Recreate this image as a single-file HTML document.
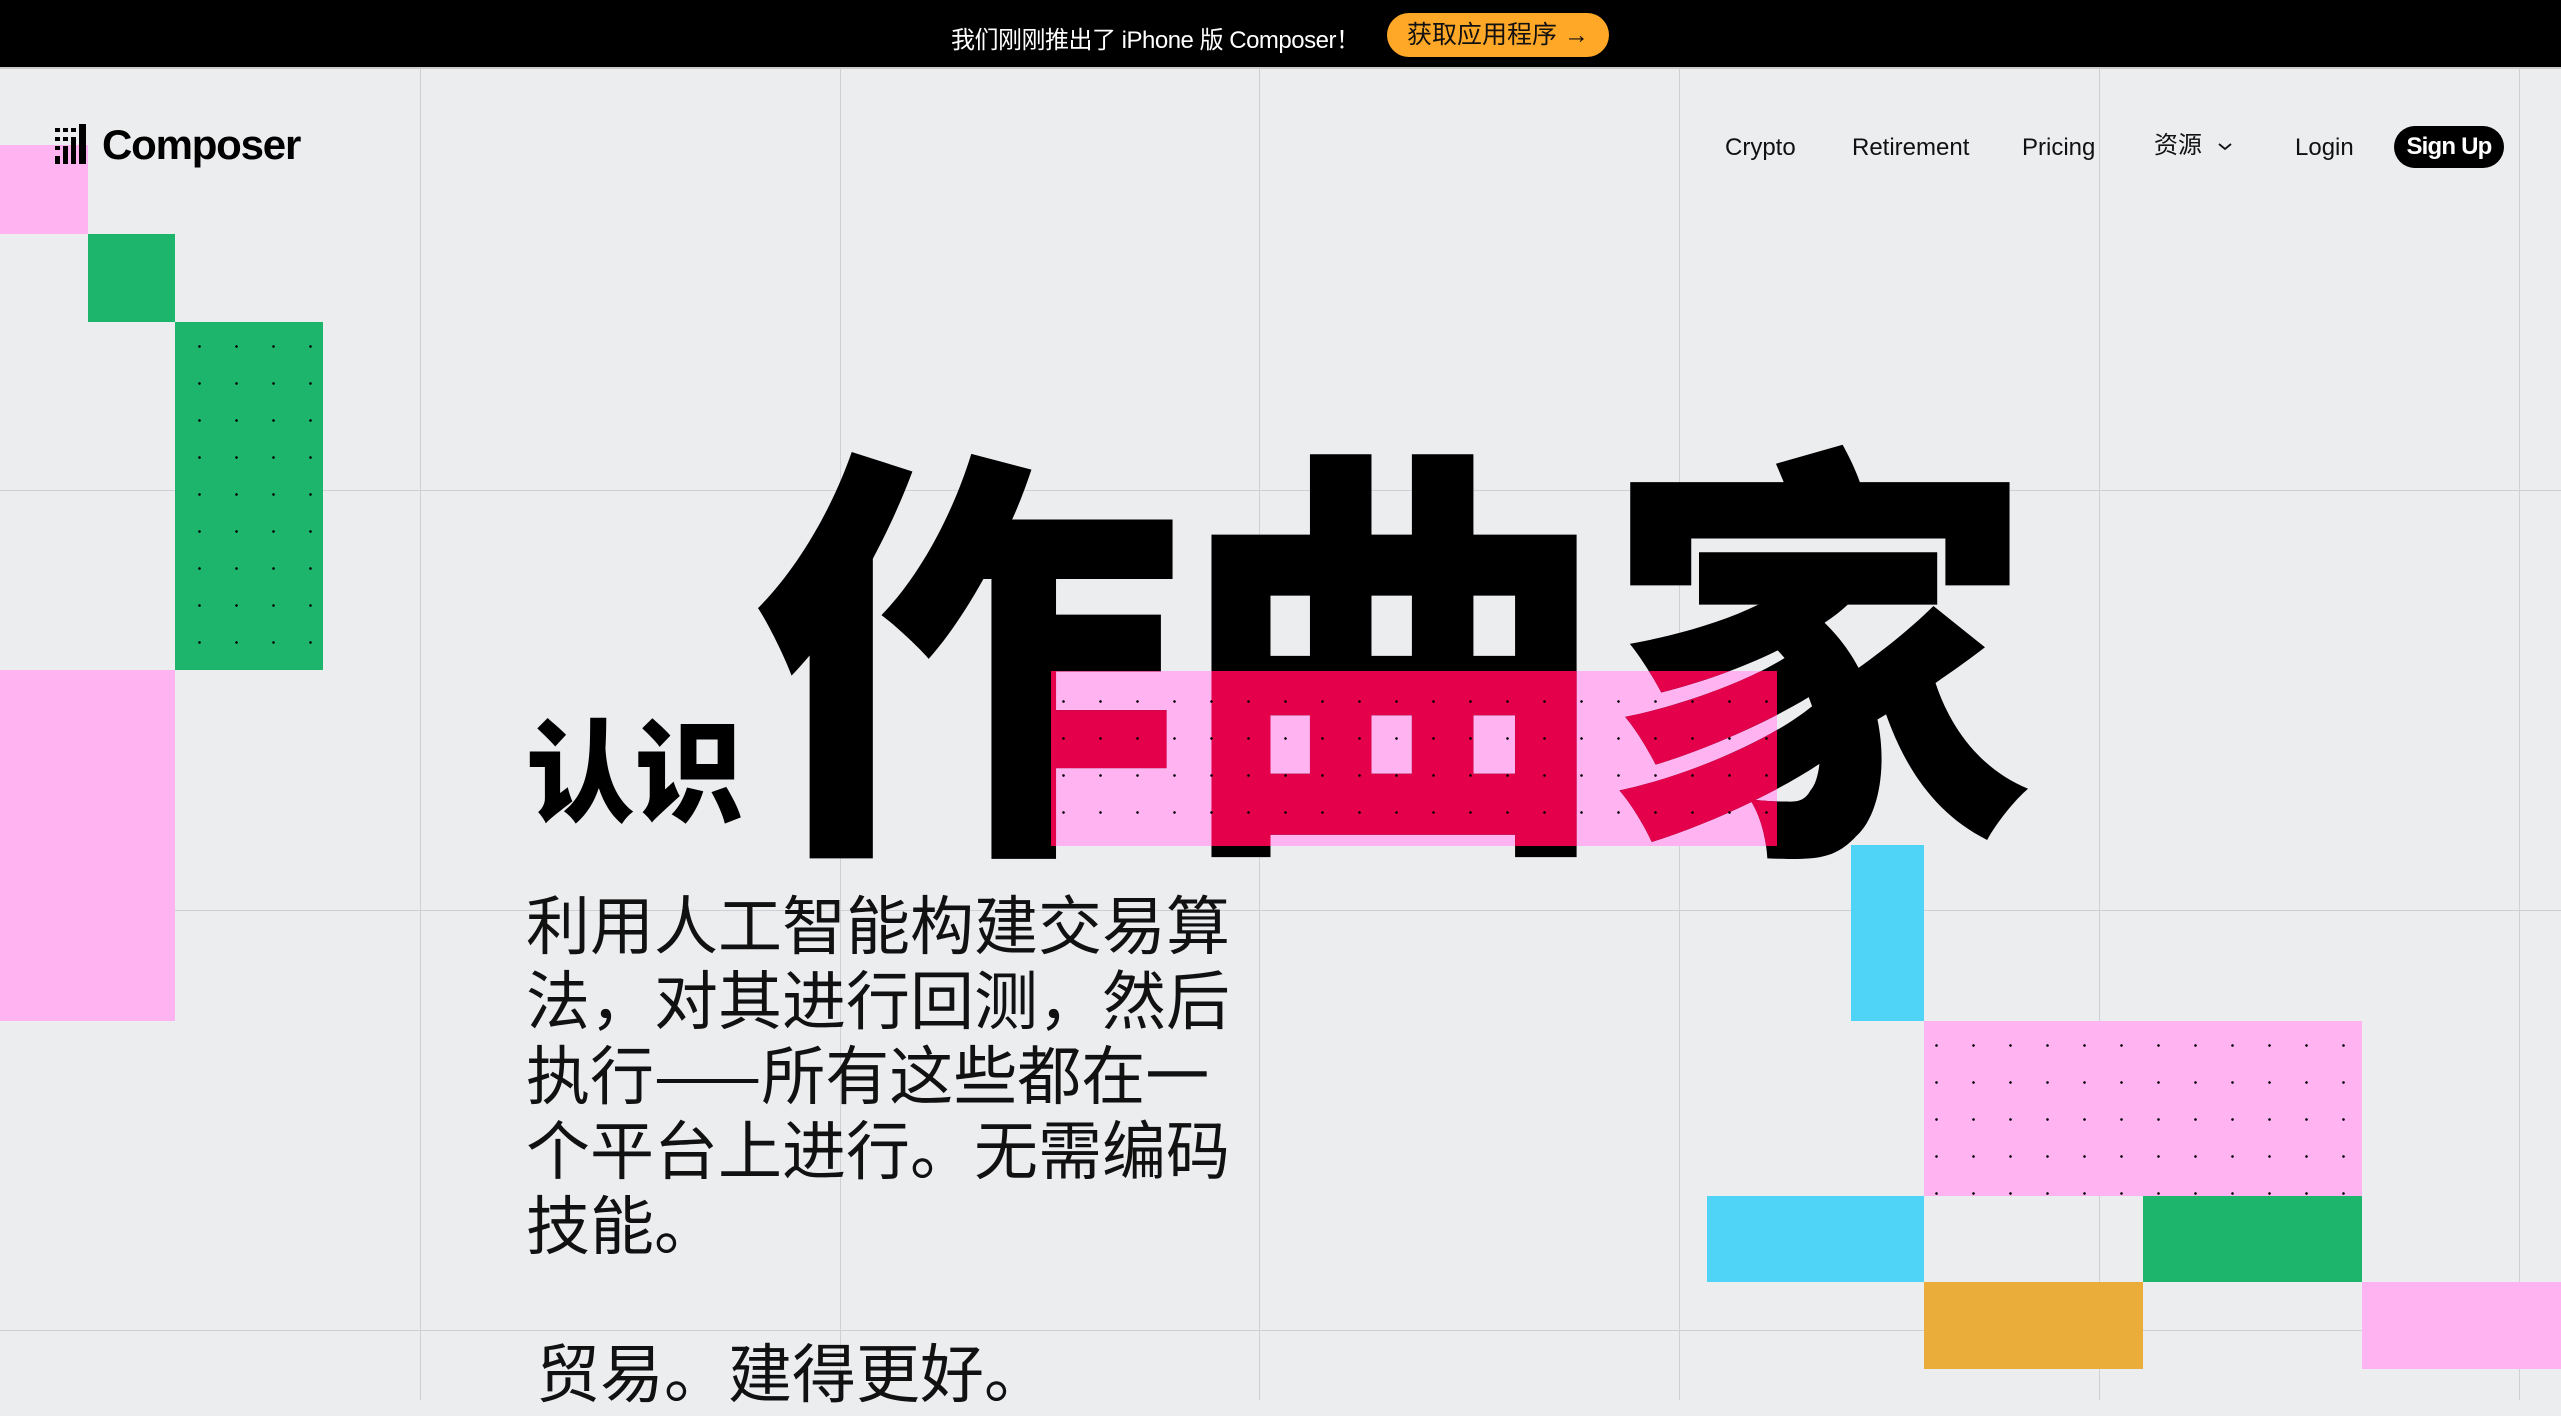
<!DOCTYPE html>
<html><head><meta charset="utf-8"><style>
*{margin:0;padding:0;box-sizing:border-box}
body{width:2561px;height:1400px;overflow:hidden;background:#ecedef;position:relative;font-family:"Liberation Sans","Noto Sans CJK SC",sans-serif}
.a{position:absolute}
.top{left:0;top:0;width:2561px;height:69px;background:#000;border-bottom:2px solid #ccc}
.vl{position:absolute;top:69px;width:1px;height:1331px;background:#cfd0d3}
.hl{position:absolute;left:0;width:2561px;height:1px;background:#cfd0d3}
.pink{background:#ffb3f0}.green{background:#1db46b}.cyan{background:#4fd4f7}.orange{background:#ebad3a}
.dots{background-image:radial-gradient(circle,#000 1.1px,transparent 1.5px);background-size:37px 37px}
.big{font-family:"Noto Sans CJK SC",sans-serif;font-weight:900;font-size:430px;line-height:430px;white-space:nowrap;letter-spacing:-4px}
.nav{font-size:24px;color:#111;top:133px;line-height:30px}
</style></head><body>
<div class="a top"></div>
<div class="a" style="left:951px;top:20px;color:#fff;font-size:24px;font-family:'Liberation Sans','Noto Sans CJK SC',sans-serif;letter-spacing:-0.5px">我们刚刚推出了 iPhone 版 Composer！</div>
<div class="a" style="left:1387px;top:13px;width:222px;height:44px;border-radius:22px;background:#ffa726;color:#111;font-size:25px;line-height:44px;text-align:center">获取应用程序 →</div>

<div class="vl" style="left:420px"></div><div class="vl" style="left:840px"></div><div class="vl" style="left:1259px"></div><div class="vl" style="left:1679px"></div><div class="vl" style="left:2099px"></div><div class="vl" style="left:2519px"></div>
<div class="hl" style="top:490px"></div><div class="hl" style="top:910px"></div><div class="hl" style="top:1330px"></div>

<div class="a pink" style="left:0;top:145px;width:88px;height:89px"></div>
<div class="a green" style="left:88px;top:234px;width:87px;height:88px"></div>
<div class="a green dots" style="left:175px;top:322px;width:148px;height:348px;background-position:6px 6px"></div>
<div class="a pink" style="left:0;top:670px;width:175px;height:351px"></div>

<div class="a cyan" style="left:1851px;top:845px;width:73px;height:176px"></div>
<div class="a pink dots" style="left:1924px;top:1021px;width:438px;height:175px;background-position:-6px 6px"></div>
<div class="a cyan" style="left:1707px;top:1196px;width:217px;height:86px"></div>
<div class="a green" style="left:2143px;top:1196px;width:219px;height:86px"></div>
<div class="a orange" style="left:1924px;top:1282px;width:219px;height:87px"></div>
<div class="a pink" style="left:2362px;top:1282px;width:199px;height:87px"></div>

<svg class="a" style="left:55px;top:124px" width="42" height="40" viewBox="0 0 42 40"><g fill="#000"><rect x="0" y="4" width="5" height="4"/><rect x="8" y="4" width="5" height="4"/><rect x="16" y="4" width="5" height="4"/><rect x="0" y="13" width="5" height="4"/><rect x="8" y="13" width="5" height="4"/><rect x="16" y="13" width="5" height="27"/><rect x="0" y="22" width="5" height="4"/><rect x="8" y="22" width="5" height="18"/><rect x="0" y="32" width="5" height="8"/><rect x="24" y="0" width="7" height="40"/></g></svg>
<div class="a" style="left:102px;top:121px;font-size:42px;font-weight:bold;letter-spacing:-1.2px;color:#000">Composer</div>

<div class="a nav" style="left:1725px">Crypto</div>
<div class="a nav" style="left:1852px">Retirement</div>
<div class="a nav" style="left:2022px">Pricing</div>
<div class="a nav" style="left:2154px;top:131px">资源</div>
<svg class="a" style="left:2216px;top:141px" width="18" height="12" viewBox="0 0 18 12"><path d="M3 3 L9 8 L15 3" fill="none" stroke="#111" stroke-width="1.8"/></svg>
<div class="a nav" style="left:2295px">Login</div>
<div class="a" style="left:2394px;top:126px;width:110px;height:42px;border-radius:21px;background:#000;color:#fff;font-weight:bold;font-size:24px;line-height:42px;text-align:center;letter-spacing:-0.8px">Sign Up</div>

<div class="a" style="left:526px;top:690px;font-family:'Noto Sans CJK SC',sans-serif;font-weight:900;font-size:112px;line-height:150px;color:#000;transform:scaleX(.97);transform-origin:left">认识</div>

<div class="a pink" style="left:1051px;top:671px;width:726px;height:175px"></div>
<div class="a big" style="left:752px;top:416px;color:#000">作曲家</div>
<div class="a" style="left:1051px;top:671px;width:726px;height:175px;overflow:hidden">
  <div class="a big" style="left:-299px;top:-255px;color:#e4004a">作曲家</div>
</div>
<div class="a dots" style="left:1051px;top:671px;width:726px;height:175px;background-position:-6px 12px"></div>

<div class="a" style="left:526px;top:885px;width:720px;font-family:'Noto Sans CJK SC',sans-serif;font-size:64px;line-height:75px;color:#111">利用人工智能构建交易算法，对其进行回测，然后执行——所有这些都在一个平台上进行。无需编码技能。</div>
<div class="a" style="left:536px;top:1330px;font-family:'Noto Sans CJK SC',sans-serif;font-size:64px;line-height:80px;color:#111">贸易。建得更好。</div>
</body></html>
